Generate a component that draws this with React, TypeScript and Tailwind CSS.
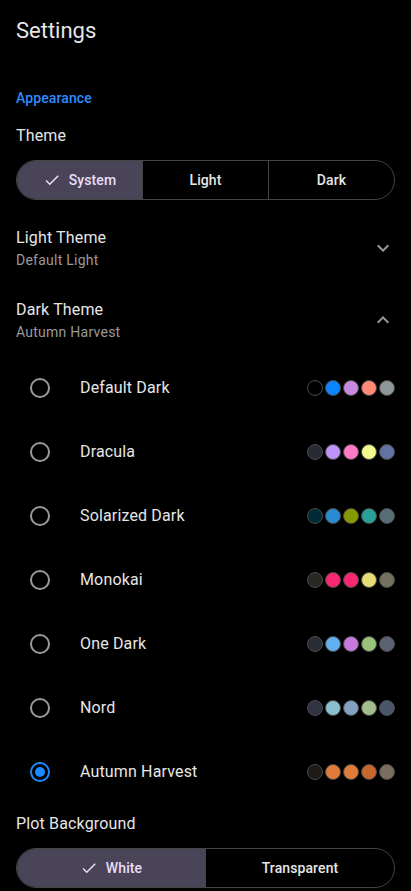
import { useState } from "react";

const CheckIcon = () => (
  <svg width="18" height="18" viewBox="0 0 24 24" fill="currentColor">
    <path d="M9 16.17L4.83 12l-1.42 1.41L9 19 21 7l-1.41-1.41z" />
  </svg>
);

const Chevron = ({ up }: { up?: boolean }) => (
  <svg
    width="24"
    height="24"
    viewBox="0 0 24 24"
    fill="#9a9a9a"
    className={up ? "rotate-180" : ""}
  >
    <path d="M16.59 8.59L12 13.17 7.41 8.59 6 10l6 6 6-6z" />
  </svg>
);

const darkThemes = [
  { name: "Default Dark", colors: ["#000000", "#0a84ff", "#c58ae0", "#ff8a75", "#8e979b"] },
  { name: "Dracula", colors: ["#282a36", "#bd93f9", "#ff79c6", "#f1fa8c", "#6272a4"] },
  { name: "Solarized Dark", colors: ["#002b36", "#268bd2", "#859900", "#2aa198", "#586e75"] },
  { name: "Monokai", colors: ["#272822", "#f92672", "#f92672", "#e6db74", "#75715e"] },
  { name: "One Dark", colors: ["#282c34", "#61afef", "#c678dd", "#98c379", "#5c6370"] },
  { name: "Nord", colors: ["#2e3440", "#88c0d0", "#81a1c1", "#a3be8c", "#4c566a"] },
  { name: "Autumn Harvest", colors: ["#1e1915", "#e07b39", "#e07b39", "#c8672c", "#7a6e62"] },
];

const Segmented = ({
  options,
  value,
  onChange,
}: {
  options: string[];
  value: string;
  onChange: (v: string) => void;
}) => (
  <div className="flex h-10 rounded-full border border-[#444] overflow-hidden">
    {options.map((opt, i) => {
      const active = opt === value;
      return (
        <button
          key={opt}
          type="button"
          onClick={() => onChange(opt)}
          className={`flex-1 flex items-center justify-center gap-2 text-sm font-medium tracking-[0.1px] ${
            i > 0 ? "border-l border-[#444]" : ""
          } ${active ? "bg-[#4a4458] text-[#e8def8]" : "text-[#e6e6e6]"}`}
        >
          {active && <CheckIcon />}
          {opt}
        </button>
      );
    })}
  </div>
);

export default function App() {
  const [theme, setTheme] = useState("System");
  const [plotBg, setPlotBg] = useState("White");
  const [dark, setDark] = useState("Autumn Harvest");

  return (
    <div
      className="min-h-[891px] w-full bg-black px-4 text-[#e6e6e6]"
      style={{ fontFamily: "Roboto, 'Noto Sans', sans-serif" }}
    >
      <h1 className="pt-[17px] text-[22px] leading-7 font-normal">Settings</h1>

      <p className="mt-[43px] text-sm leading-5 font-medium tracking-[0.1px] text-[#2f8cff]">
        Appearance
      </p>

      <p className="mt-4 text-base leading-6 tracking-[0.15px]">Theme</p>
      <div className="mt-3">
        <Segmented options={["System", "Light", "Dark"]} value={theme} onChange={setTheme} />
      </div>

      <div className="mt-3 h-[72px] flex items-center justify-between">
        <div>
          <p className="text-base leading-6 tracking-[0.15px]">Light Theme</p>
          <p className="text-sm leading-5 tracking-[0.25px] text-[#9a9a9a]">Default Light</p>
        </div>
        <Chevron />
      </div>

      <div className="h-[72px] flex items-center justify-between">
        <div>
          <p className="text-base leading-6 tracking-[0.15px]">Dark Theme</p>
          <p className="text-sm leading-5 tracking-[0.25px] text-[#9a9a9a]">{dark}</p>
        </div>
        <Chevron up />
      </div>

      <div className="flex flex-col">
        {darkThemes.map((t) => {
          const selected = t.name === dark;
          return (
            <button
              key={t.name}
              type="button"
              onClick={() => setDark(t.name)}
              className="h-16 flex items-center gap-4 text-left"
            >
              <span className="w-12 flex justify-center">
                <span
                  className={`w-5 h-5 rounded-full border-2 flex items-center justify-center ${
                    selected ? "border-[#1a88ff]" : "border-[#9a9a9a]"
                  }`}
                >
                  {selected && <span className="w-2.5 h-2.5 rounded-full bg-[#1a88ff]" />}
                </span>
              </span>
              <span className="flex-1 text-base tracking-[0.15px]">{t.name}</span>
              <span className="flex gap-[2px]">
                {t.colors.map((c, i) => (
                  <span
                    key={i}
                    className="w-4 h-4 rounded-full border border-[#4a4a4a]"
                    style={{ backgroundColor: c }}
                  />
                ))}
              </span>
            </button>
          );
        })}
      </div>

      <p className="mt-2 text-base leading-6 tracking-[0.15px]">Plot Background</p>
      <div className="mt-3">
        <Segmented options={["White", "Transparent"]} value={plotBg} onChange={setPlotBg} />
      </div>
    </div>
  );
}
